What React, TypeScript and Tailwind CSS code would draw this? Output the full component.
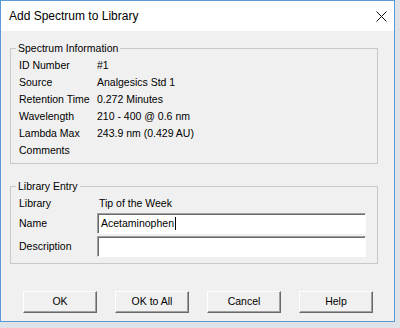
import React from 'react'

// Classic Win32 "Add Spectrum to Library" dialog

const FONT = { fontFamily: '"Liberation Sans", Arial, sans-serif' }

const SPECTRUM_INFO: [string, string][] = [
  ['ID Number', '#1'],
  ['Source', 'Analgesics Std 1'],
  ['Retention Time', '0.272 Minutes'],
  ['Wavelength', '210 - 400 @ 0.6 nm'],
  ['Lambda Max', '243.9 nm (0.429 AU)'],
  ['Comments', ''],
]

const BUTTONS = ['OK', 'OK to All', 'Cancel', 'Help']

function CloseIcon() {
  return (
    <svg width="11" height="11" viewBox="0 0 11 11" className="mr-[7px]">
      <path d="M0.5 0.5 L10.5 10.5 M10.5 0.5 L0.5 10.5" stroke="#111" strokeWidth="1" fill="none" />
    </svg>
  )
}

function GroupBox({
  title,
  className,
  children,
}: {
  title: string
  className?: string
  children: React.ReactNode
}) {
  return (
    <fieldset className={'w-[368px] border border-[#c9c9c9] pl-[8px] ' + (className ?? '')}>
      <legend className="ml-[-3px] px-[2px] leading-[14px]">{title}</legend>
      {children}
    </fieldset>
  )
}

function SunkenField({ children }: { children?: React.ReactNode }) {
  return (
    <div className="flex h-[21px] w-[269px] items-center border-[1px] border-t-[#a0a0a0] border-l-[#a0a0a0] border-b-white border-r-white bg-white pl-[3px] shadow-[inset_1px_1px_0_#696969]">
      {children}
    </div>
  )
}

function DialogButton({ label }: { label: string }) {
  return (
    <button className="flex h-[22px] w-[74px] items-center justify-center border border-t-white border-l-white border-r-[#696969] border-b-[#696969] bg-[#f0f0f0] text-black shadow-[inset_-1px_-1px_0_#a0a0a0]">
      {label}
    </button>
  )
}

export default function App() {
  return (
    <div className="h-[328px] w-[400px] bg-[#dfe3e7]" style={FONT}>
      <div className="flex h-[322px] w-[395px] flex-col border border-[#5b9bd5] bg-[#f0f0f0] text-[10.5px] text-black">
        {/* title bar */}
        <div className="flex h-[30px] items-center justify-between bg-white pl-[8px]">
          <span className="text-[12px]">Add Spectrum to Library</span>
          <CloseIcon />
        </div>

        <div className="flex flex-1 flex-col pl-[9px] pt-[10px]">
          <GroupBox title="Spectrum Information" className="pb-[4px]">
            <div className="grid grid-cols-[78px_1fr] pt-[2px] leading-[17px]">
              {SPECTRUM_INFO.map(([label, value]) => (
                <React.Fragment key={label}>
                  <span>{label}</span>
                  <span>{value}</span>
                </React.Fragment>
              ))}
            </div>
          </GroupBox>

          <GroupBox title="Library Entry" className="mt-[15px] pb-[6px]">
            <div className="flex flex-col pt-[2px]">
              <div className="flex h-[17px] items-center">
                <span className="w-[80px]">Library</span>
                <span>Tip of the Week</span>
              </div>
              <div className="mt-[1px] flex items-center">
                <span className="w-[78px]">Name</span>
                <SunkenField>
                  <span>Acetaminophen</span>
                  <span className="ml-[1px] inline-block h-[13px] w-[1px] bg-black" />
                </SunkenField>
              </div>
              <div className="mt-[2px] flex items-center">
                <span className="w-[78px]">Description</span>
                <SunkenField />
              </div>
            </div>
          </GroupBox>

          <div className="ml-[13px] mt-[27px] flex gap-[18px]">
            {BUTTONS.map(label => (
              <DialogButton key={label} label={label} />
            ))}
          </div>
        </div>
      </div>
    </div>
  )
}
